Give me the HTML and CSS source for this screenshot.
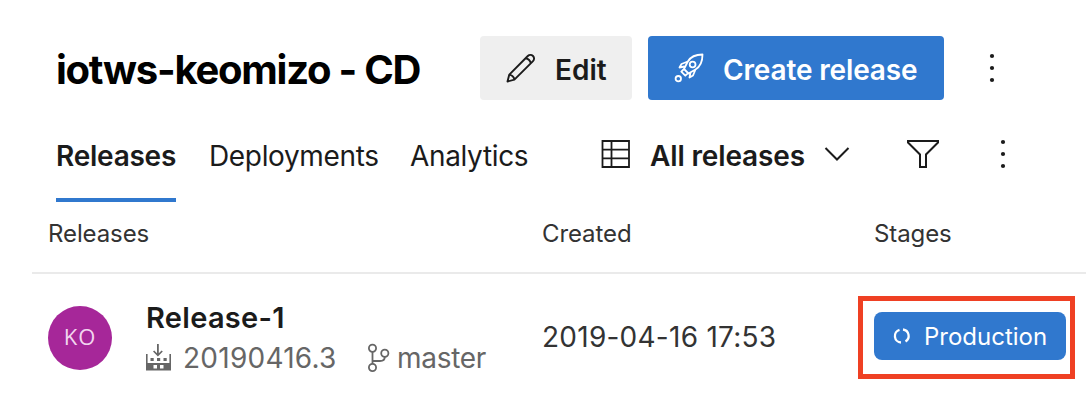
FILE: index.html
```html
<!DOCTYPE html>
<html lang="en">
<head>
<meta charset="utf-8">
<title>iotws-keomizo - CD</title>
<link rel="stylesheet" href="styles.css">
</head>
<body>
<header class="header">
  <h1 class="title"><span>iotws-keomizo - CD</span></h1>
  <button class="button button-edit">
    <svg class="icon" width="32" height="32" viewBox="0 0 32 32" fill="none" stroke="currentColor" stroke-width="1.9" stroke-linejoin="round"><path d="M2.5 29.5 4.3 22.6 22.8 4A3.6 3.6 0 0 1 28 9.2L9.4 27.7ZM4.3 22.6Q8.7 23.3 9.4 27.7M20.6 6.2Q25 7 25.8 11.4"/></svg>
    <span class="edit-label">Edit</span>
  </button>
  <button class="button button-create">
    <svg class="icon" width="32" height="32" viewBox="0 0 32 32" fill="none" stroke="currentColor" stroke-width="1.8" stroke-linejoin="round"><path d="M29.5 2.5C22 2.5 17.5 5 14.8 9.5L11 17l4.500 4.500 7-4C27.500 14.500 29.500 10 29.500 2.500ZM14.800 9.500 8.500 12 6.500 15.500 11.500 14.500M22.500 17.500 20 23.500 16.500 25.500 17.500 20.500M11 17 8.300 19.700 12.300 23.700 15 21"/><circle cx="19.600" cy="12.500" r="2.900"/><circle cx="5.300" cy="26.700" r="2.700"/></svg>
    <span class="create-label">Create release</span>
  </button>
  <svg class="more-top" width="8" height="32" viewBox="0 0 8 32" fill="currentColor"><circle cx="4" cy="4" r="2.100"/><circle cx="4" cy="16" r="2.100"/><circle cx="4" cy="28" r="2.100"/></svg>
</header>

<nav class="toolbar">
  <a class="tab tab-releases">Releases</a>
  <a class="tab tab-deployments">Deployments</a>
  <a class="tab tab-analytics">Analytics</a>
  <div class="filter">
    <svg width="30" height="30" viewBox="0 0 30 30" fill="none" stroke="currentColor" stroke-width="1.8"><path d="M2.500 2H29V28H2.500ZM2.500 10.700H29M2.500 19.300H29M11.500 2V28"/></svg>
    <span class="filter-label">All releases</span>
    <svg width="26" height="16" viewBox="0 0 26 16" fill="none" stroke="currentColor" stroke-width="2"><path d="M1.500 2 13 13.500 24.500 2"/></svg>
  </div>
  <svg class="funnel" width="34" height="30" viewBox="0 0 34 30" fill="none" stroke="currentColor" stroke-width="2"><path d="M2 2H32V3.500L20 15.500V28H14V15.500L2 3.500Z"/></svg>
  <svg class="more-tabs" width="8" height="32" viewBox="0 0 8 32" fill="currentColor"><circle cx="4" cy="4" r="2.100"/><circle cx="4" cy="16" r="2.100"/><circle cx="4" cy="28" r="2.100"/></svg>
</nav>

<main class="table">
  <div class="columns">
    <span class="head-releases">Releases</span>
    <span class="head-created">Created</span>
    <span class="head-stages">Stages</span>
  </div>
  <div class="row">
    <div class="avatar">KO</div>
    <div class="release">
      <div class="release-name">Release-1</div>
      <div class="meta">
        <svg width="26" height="28" viewBox="0 0 26 28" fill="currentColor"><path d="M11 0h1.800v9.200l2.800-2.800 1.200 1.200L11.900 12.500 7 7.600 8.200 6.400l2.800 2.800ZM0 10h1.600v9H23.400v-9H25v16.500H0ZM4.500 14h3.200v3H4.500ZM11 14h3.200v3H11ZM17.500 14h3.200v3h-3.200ZM7.500 21v3.500H11V21ZM14 21v3.500h3.500V21Z" fill-rule="evenodd"/></svg>
        <span class="build">20190416.3</span>
        <svg class="branch" width="24" height="30" viewBox="0 0 24 30" fill="none" stroke="currentColor" stroke-width="1.800"><circle cx="5.500" cy="5.300" r="3.600"/><circle cx="5.500" cy="24.500" r="3.600"/><circle cx="17.800" cy="10.300" r="3.600"/><path d="M5.500 9V21M5.500 18H13Q17.800 18 17.800 14"/></svg>
        <span class="branch-name">master</span>
      </div>
    </div>
    <div class="date">2019-04-16 17:53</div>
    <div class="highlight">
      <div class="stage">
        <svg width="18" height="18" viewBox="0 0 18 18" fill="none" stroke="currentColor" stroke-width="2.300"><path d="M6.500 2.800A6.500 6.500 0 0 0 8 15.500M10 2.500A6.500 6.500 0 0 1 12.500 14.500"/></svg>
        <span class="stage-label">Production</span>
      </div>
    </div>
  </div>
</main>
</body>
</html>
```
FILE: styles.css
```css
* { box-sizing: border-box; }
body {
  margin: 0;
  width: 1086px;
  height: 412px;
  overflow: hidden;
  background: #fff;
  color: #1b1b1b;
  font-family: Inter, "Liberation Sans", sans-serif;
  font-size: 28px;
  white-space: nowrap;
}
svg { display: block; flex: none; }
.header { display: flex; align-items: center; height: 100px; padding: 36px 0 0 56px; }
.title { width: 424px; margin: 0; font-size: 40px; line-height: 64px; font-weight: 650; letter-spacing: -1.25px; color: #000; padding-top: 4px; }
.button {
  display: flex;
  align-items: center;
  height: 64px;
  margin: 0;
  padding: 4px 0 0 25px;
  border: 0;
  border-radius: 4px;
  font: 600 28px/60px Inter, sans-serif;
}
.button .icon { margin-top: -4px; }
.button-edit { width: 152px; background: #efefef; color: #1b1b1b; gap: 18px; }
.button-create { width: 296px; margin-left: 16px; background: #3078ce; color: #fff; gap: 18px; letter-spacing: -0.15px; }
.more-top { margin-left: 44px; }

.toolbar { display: flex; height: 102px; padding-left: 56px; }
.tab { height: 102px; padding-top: 36px; line-height: 40px; }
.tab-releases { width: 120px; font-weight: 600; letter-spacing: -0.25px; border-bottom: 4px solid #3078ce; }
.tab-deployments { width: 169px; margin-left: 33px; letter-spacing: -0.35px; }
.tab-analytics { width: 118px; margin-left: 32px; letter-spacing: -0.35px; }
.filter { display: flex; align-items: center; width: 250px; height: 40px; margin: 36px 0 0 72px; font-weight: 600; }
.filter svg { margin-top: -4px; }
.filter-label { width: 154px; margin: 0 20px; letter-spacing: -0.15px; }
.funnel { margin: 39px 0 0 56px; }
.more-tabs { margin: 38px 0 0 59px; }

.columns { display: grid; grid-template-columns: 494px 332px 1fr; height: 72px; margin-left: 32px; padding: 17px 0 0 16px; border-bottom: 2px solid #eaeaea; font-size: 24px; line-height: 30px; letter-spacing: -0.1px; color: #333; }
.row { display: flex; padding-left: 48px; }
.avatar { width: 64px; height: 64px; margin-top: 32px; border-radius: 50%; background: #a62799; color: #f2d5ef; font: 400 22px/61px "Open Sans", sans-serif; text-align: center; letter-spacing: 1px; }
.release { width: 396px; margin-left: 34px; padding-top: 24px; }
.release-name { font-size: 29px; line-height: 40px; font-weight: 600; letter-spacing: 0.3px; }
.meta { display: flex; align-items: center; height: 40px; color: #666; }
.build { width: 154px; margin-left: 11px; letter-spacing: 0.25px; }
.branch { margin-left: 30px; }
.branch-name { margin-left: 6px; letter-spacing: -0.3px; }
.date { width: 316px; padding-top: 43px; line-height: 40px; letter-spacing: 0.25px; color: #333; }
.highlight { width: 217px; height: 83px; margin-top: 22px; padding: 11px; border: 5px solid #ef4023; }
.stage { display: flex; align-items: center; width: 192px; height: 48px; padding-left: 19px; border-radius: 8px; background: #3078ce; color: #fff; font-size: 24px; }
.stage-label { margin-left: 13px; }
```
